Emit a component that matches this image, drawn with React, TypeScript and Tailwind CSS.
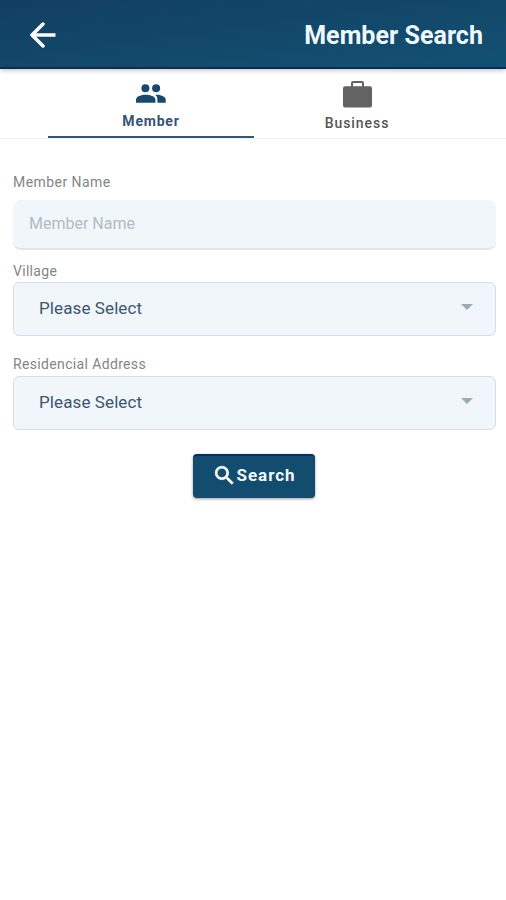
import React from "react";

function SelectField({ label, className, labelClass }: { label: string; className: string; labelClass: string }) {
  return (
    <div className={className}>
      <div className={`text-[14px] leading-[20px] text-[#858585] ${labelClass}`}>{label}</div>
      <button
        type="button"
        className="flex h-[54px] w-full items-center justify-between rounded-[6px] border border-[#d5ddeb] bg-[#f1f6fa] pr-[22px] pl-[25px] text-left"
      >
        <span className="mb-[2px] text-[17px] leading-[20px] tracking-[0.1px] text-[#3c5570]">Please Select</span>
        <svg width="12" height="6" viewBox="0 0 12 6" className="mb-[4px] fill-[#98adba]">
          <path d="M0 0h12L6 6z" />
        </svg>
      </button>
    </div>
  );
}

export default function App() {
  return (
    <div className="h-[900px] w-full overflow-hidden bg-white font-['Roboto',sans-serif]">
      <header className="relative flex h-[69px] items-center justify-between border-b-2 border-[#0b2c58] bg-gradient-to-br from-[#123f61] to-[#125173] pt-[3px] pr-[23px] pl-[30px] shadow-[0_1px_5px_rgba(0,0,0,0.28)]">
        <svg width="26" height="26" viewBox="0 0 26 26" className="fill-none stroke-white stroke-[3.5] [stroke-linejoin:round]">
          <path d="M25.500 13H2.500" />
          <path d="M13 2L2 13L13 24" className="[stroke-linecap:round]" />
        </svg>
        <h1 className="pt-[2px] text-[25px] leading-[30px] font-bold tracking-[0.05px] text-[#f0f8ff]">Member Search</h1>
      </header>

      <nav className="flex h-[70px] justify-center border-b border-[#f2f2f2] pl-[2px]">
        <button type="button" className="flex h-[69px] w-[206px] flex-col items-center border-b-2 border-[#32567c] pt-[15px]">
          <svg width="30" height="19" viewBox="0 0 30 19" className="fill-[#174870]">
            <circle cx="9.400" cy="4.300" r="4" />
            <circle cx="20.100" cy="4.300" r="4" />
            <path d="M0 18.800V15.500C0 12.300 5.500 10.700 9.700 10.700S19.400 12.300 19.400 15.500V18.800z" />
            <path d="M19.300 10.700C24 10.500 29.700 12.300 29.700 15.500V18.800H21.400V15.500C21.400 13.500 20.600 11.800 19.300 10.700z" />
          </svg>
          <span className="mt-[9px] text-[14px] leading-[18px] font-bold tracking-[0.8px] text-[#355575]">Member</span>
        </button>
        <button type="button" className="flex h-[69px] w-[206px] flex-col items-center pt-[12px]">
          <svg width="29" height="27" viewBox="0 0 29 27" className="fill-[#636363]">
            <path fillRule="evenodd" d="M10 0h9q2 0 2 2V5.300h6q2 0 2 2v17.200q0 2-2 2h-25q-2 0-2-2V7.300Q0 5.300 2 5.300H8V2Q8 0 10 0zM10 2v3.300h9V2z" />
          </svg>
          <span className="mt-[6px] text-[14px] leading-[18px] font-medium tracking-[0.95px] text-[#555555]">Business</span>
        </button>
      </nav>

      <main className="flex flex-col pt-[33px] pr-[10px] pl-[13px]">
        <label className="h-[20px] text-[14px] leading-[20px] tracking-[0.45px] text-[#858585]">Member Name</label>
        <input
          placeholder="Member Name"
          className="mt-[8px] h-[50px] w-full rounded-[8px] border-b-2 border-[#e1e6ea] bg-[#f1f6fa] px-[16px] pb-[2px] text-[16px] outline-none placeholder:text-[#b3bbc3]"
        />
        <SelectField label="Village" className="mt-[11px]" labelClass="h-[21px] tracking-[0.3px]" />
        <SelectField label="Residencial Address" className="mt-[18px]" labelClass="h-[22px] tracking-[0.35px]" />
        <button
          type="button"
          className="mr-[1px] mt-[24px] flex h-[44px] w-[122px] items-center justify-center self-center rounded-[4px] border-t-2 border-[#0b2d5b] bg-[#124d70] pr-[1px] pb-[4px] shadow-[0_1px_3px_rgba(0,0,0,0.4)]"
        >
          <svg width="25" height="25" viewBox="0 0 24 24" className="fill-white stroke-white stroke-[0.6]">
            <path d="M15.500 14h-.79l-.28-.27A6.471 6.471 0 0 0 16 9.500 6.500 6.500 0 1 0 9.500 16c1.610 0 3.090-.59 4.230-1.570l.27.28v.79l5 4.990L20.490 19l-4.990-5zm-6 0C7.010 14 5 11.990 5 9.500S7.010 5 9.500 5 14 7.010 14 9.500 11.990 14 9.500 14z" />
          </svg>
          <span className="text-[17px] leading-[20px] font-bold tracking-[0.95px] text-[#f3faff]">Search</span>
        </button>
      </main>
    </div>
  );
}
